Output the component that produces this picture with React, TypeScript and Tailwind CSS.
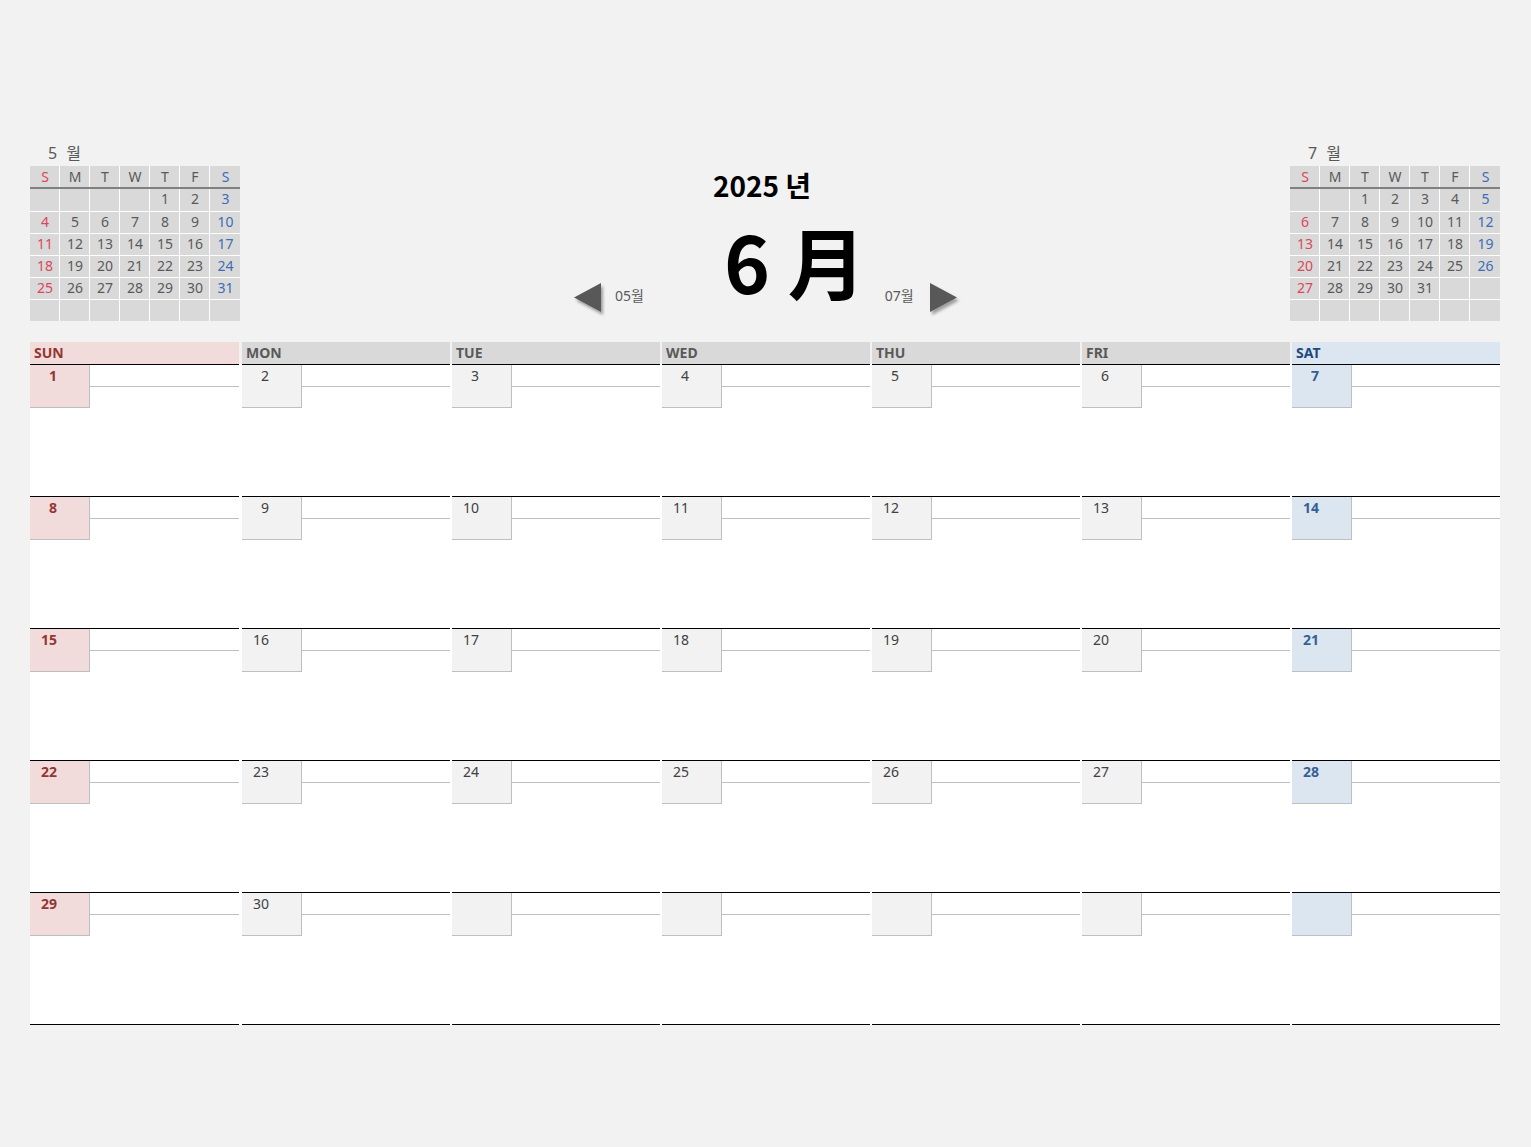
import React from "react";

const FONT = "font-['Noto_Sans','Noto_Sans_CJK_KR',sans-serif]";

type MiniProps = { num: string; weeks: (number | null)[][] };

function MiniCal({ num, weeks }: MiniProps) {
  const heads = ["S", "M", "T", "W", "T", "F", "S"];
  const color = (i: number) =>
    i === 0 ? "text-[#d9475a]" : i === 6 ? "text-[#3f6db5]" : "text-[#595959]";
  return (
    <div className="w-[210px]">
      <div className="h-[26px] pl-[18px] pt-[2px] text-[16px] leading-[22px] text-[#595959] flex">
        <span>{num}</span>
        <span className="ml-[9px]">{" "}월</span>
      </div>
      <div className="flex h-[21px] bg-[#d9d9d9] border-b-2 border-[#808080] box-content">
        {heads.map((h, i) => (
          <div
            key={i}
            className={`w-[30px] pl-[1px] text-center text-[14px] leading-[21px] ${color(i)} ${
              i < 6 ? "border-r border-white" : ""
            }`}
          >
            {h}
          </div>
        ))}
      </div>
      {weeks.map((w, r) => (
        <div key={r} className={`flex h-[22px] ${r > 0 ? "border-t border-white" : ""}`}>
          {w.map((d, i) => (
            <div
              key={i}
              className={`w-[30px] pl-[1px] bg-[#d9d9d9] text-center text-[14px] leading-[19px] ${color(i)} ${
                i < 6 ? "border-r border-white" : ""
              }`}
            >
              {d ?? ""}
            </div>
          ))}
        </div>
      ))}
    </div>
  );
}

function Arrow({ dir }: { dir: "left" | "right" }) {
  return (
    <svg width="34" height="36" viewBox="0 0 34 36" className="overflow-visible block">
      <defs>
        <filter id={`sh-${dir}`} x="-30%" y="-30%" width="170%" height="170%">
          <feDropShadow dx="2" dy="3" stdDeviation="1.8" floodColor="#000" floodOpacity="0.35" />
        </filter>
      </defs>
      {dir === "left" ? (
        <polygon points="28,2 28,31 1,16.5" fill="#595959" filter={`url(#sh-${dir})`} />
      ) : (
        <polygon points="1,2 1,31 28,16.5" fill="#595959" filter={`url(#sh-${dir})`} />
      )}
    </svg>
  );
}

const may: (number | null)[][] = [
  [null, null, null, null, 1, 2, 3],
  [4, 5, 6, 7, 8, 9, 10],
  [11, 12, 13, 14, 15, 16, 17],
  [18, 19, 20, 21, 22, 23, 24],
  [25, 26, 27, 28, 29, 30, 31],
  [null, null, null, null, null, null, null],
];
const july: (number | null)[][] = [
  [null, null, 1, 2, 3, 4, 5],
  [6, 7, 8, 9, 10, 11, 12],
  [13, 14, 15, 16, 17, 18, 19],
  [20, 21, 22, 23, 24, 25, 26],
  [27, 28, 29, 30, 31, null, null],
  [null, null, null, null, null, null, null],
];
const june: (number | null)[][] = [
  [1, 2, 3, 4, 5, 6, 7],
  [8, 9, 10, 11, 12, 13, 14],
  [15, 16, 17, 18, 19, 20, 21],
  [22, 23, 24, 25, 26, 27, 28],
  [29, 30, null, null, null, null, null],
];

const dayNames = ["SUN", "MON", "TUE", "WED", "THU", "FRI", "SAT"];
const COLS = "grid grid-cols-[212px_repeat(5,210px)_208px]";
const padFor = (i: number) => (i === 0 ? "pr-[3px]" : i === 6 ? "" : "pr-[2px]");

export default function App() {
  return (
    <div className={`w-[1531px] h-[1147px] bg-[#f2f2f2] pt-[140px] pl-[30px] ${FONT}`}>
      <div className="w-[1470px]">
        {/* top section */}
        <div className="flex h-[202px]">
          <MiniCal num="5" weeks={may} />
          <div className="flex-1 flex flex-col">
            <div className="mt-[28px] self-center ml-[-6px] text-[28px] leading-[34px] font-bold text-black font-['Noto_Sans_CJK_KR',sans-serif]">
              2025 년
            </div>
            <div className="flex items-start mt-[19px] pl-[333px]">
              <div className="flex items-start mt-[60px]">
                <Arrow dir="left" />
                <span className="ml-[8px] mt-[5px] text-[14px] leading-[20px] text-[#595959]">05월</span>
              </div>
              <div className="ml-[80px] text-[78px] leading-[78px] font-bold text-black font-['Noto_Sans_CJK_KR',sans-serif]">
                6 月
              </div>
              <div className="flex items-start ml-[19px] mt-[60px]">
                <span className="mr-[15px] mt-[5px] text-[14px] leading-[20px] text-[#595959]">07월</span>
                <Arrow dir="right" />
              </div>
            </div>
          </div>
          <MiniCal num="7" weeks={july} />
        </div>

        {/* header row */}
        <div className={COLS}>
          {dayNames.map((d, i) => (
            <div key={d} className={padFor(i)}>
              <div
                className={`h-[22px] pl-[4px] text-[14px] leading-[22px] font-bold ${
                  i === 0
                    ? "bg-[#f2dcdb] text-[#943634]"
                    : i === 6
                    ? "bg-[#dce6f1] text-[#1f497d]"
                    : "bg-[#d9d9d9] text-[#595959]"
                }`}
              >
                {d}
              </div>
            </div>
          ))}
        </div>

        {/* body */}
        <div className="bg-white">
          {june.map((w, r) => (
            <div key={r} className={COLS}>
              {w.map((d, i) => (
                <div key={i} className={padFor(i)}>
                  <div
                    className={`border-t border-black flex items-start ${
                      r === june.length - 1 ? "border-b h-[133px]" : "h-[132px]"
                    }`}
                  >
                    <div
                      className={`w-[60px] h-[43px] border-r border-b border-[#bfbfbf] shrink-0 ${
                        i === 0 ? "bg-[#f2dcdb]" : i === 6 ? "bg-[#dce6f1]" : "bg-[#f2f2f2]"
                      }`}
                    >
                      <div
                        className={`w-[27px] text-right text-[14px] leading-[20px] pt-[1px] ${
                          i === 0
                            ? "font-bold text-[#943634]"
                            : i === 6
                            ? "font-bold text-[#366092]"
                            : "text-[#404040]"
                        }`}
                      >
                        {d ?? ""}
                      </div>
                    </div>
                    <div className="flex-1 h-[22px] border-b border-[#bfbfbf]" />
                  </div>
                </div>
              ))}
            </div>
          ))}
        </div>
      </div>
    </div>
  );
}
